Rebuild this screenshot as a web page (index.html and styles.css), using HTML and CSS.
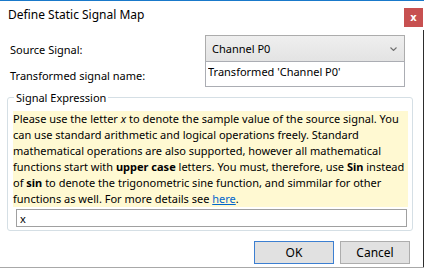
FILE: index.html
```html
<!DOCTYPE html>
<html lang="en">
<head>
  <meta charset="UTF-8" />
  <title>Define Static Signal Map</title>
  <link rel="stylesheet" href="styles.css">
</head>
<body>

  <div class="dialog">
    <div class="titlebar">
      <span class="title">Define Static Signal Map</span>
      <button class="close">x</button>
    </div>

    <div class="content">
      <div class="form-row">
        <label class="label">Source Signal:</label>
        <div class="combo">
          <span>Channel P0</span>
          <svg class="chevron" width="7" height="4" viewBox="0 0 7 4">
            <path d="M0.5 0.5 L3.5 3.5 L6.5 0.5" fill="none" stroke="#707070" stroke-width="1.1" />
          </svg>
        </div>
      </div>

      <div class="form-row">
        <label class="label">Transformed signal name:</label>
        <input class="textbox" type="text" value="Transformed 'Channel P0'">
      </div>

      <fieldset class="group">
        <legend class="legend">Signal Expression</legend>
        <p class="help">Please use the letter <i>x</i> to denote the sample value of the source signal. You can use standard arithmetic and logical operations freely. Standard mathematical operations are also supported, however all mathematical functions start with <b>upper case</b> letters. You must, therefore, use <b>Sin</b> instead of <b>sin</b> to denote the trigonometric sine function, and simmilar for other functions as well. For more details see <a href="#">here</a>.</p>
        <input class="expr" type="text" value="x">
      </fieldset>

      <div class="buttons">
        <button class="btn btn-ok">OK</button>
        <button class="btn btn-cancel">Cancel</button>
      </div>
    </div>
  </div>

</body>
</html>
```

FILE: styles.css
```css
* {
  box-sizing: border-box;
}

body {
  margin: 0;
  font-family: 'Noto Sans', 'Open Sans', sans-serif;
  font-size: 11px;
  color: #000;
  background: #fff;
}

.dialog {
  width: 424px;
  height: 268px;
  display: flex;
  flex-direction: column;
  border-top: 1px solid #1979ca;
  border-bottom: 1px solid #a8a8a8;
}

.titlebar {
  height: 29px;
  display: flex;
  align-items: flex-start;
  justify-content: space-between;
  padding-left: 8px;
}

.title {
  font-size: 12px;
  margin-top: 5px;
}

.close {
  width: 19px;
  height: 19px;
  margin-top: 7px;
  margin-right: 1px;
  border: none;
  padding: 0;
  background: #c75050;
  color: #fff;
  font-family: 'DejaVu Sans', sans-serif;
  font-weight: bold;
  font-size: 10px;
  line-height: 17px;
}

.content {
  flex: 1;
  border-right: 1px solid #2d2d2d;
  padding: 5px 18px 0 10px;
}

.form-row {
  display: flex;
  align-items: center;
  justify-content: space-between;
}

.label {
  padding-top: 2px;
}

.combo {
  width: 200px;
  height: 27px;
  display: flex;
  align-items: center;
  justify-content: space-between;
  padding: 0 7px 0 6px;
  border: 1px solid #acacac;
  background: linear-gradient(#efefef, #e3e3e3);
}

.chevron {
  margin-top: 1px;
}

.textbox {
  width: 200px;
  height: 26px;
  margin-top: -1px;
  padding: 0 2px 6px;
  border: 1px solid #abadb3;
  font-family: inherit;
  font-size: 11px;
  color: #000;
}

.group {
  margin: 3px -8px 0 -3px;
  padding: 6px 4px 3px 5px;
  border: 1px solid #d5dfe5;
  border-radius: 3px;
}

.legend {
  padding: 0 2px;
  margin-left: 1px;
  line-height: 15px;
}

.help {
  margin: 0;
  padding: 0 2px 0 0;
  background: #fff9d2;
  line-height: 16px;
}

.help a {
  color: #0066cc;
}

.expr {
  display: block;
  width: 391px;
  height: 18px;
  margin: 2px 0 0 3px;
  padding: 0 3px;
  border: 1px solid #a0a0a0;
  font-family: inherit;
  font-size: 11px;
}

.buttons {
  display: flex;
  justify-content: flex-end;
  gap: 6px;
  margin-top: 10px;
  margin-right: -5px;
}

.btn {
  height: 23px;
  padding: 0;
  background: #e1e1e1;
  border: 1px solid #adadad;
  font-family: inherit;
  font-size: 12px;
  color: #000;
}

.btn-ok {
  width: 80px;
  border-color: #3c7fd1;
}

.btn-cancel {
  width: 70px;
}
```
